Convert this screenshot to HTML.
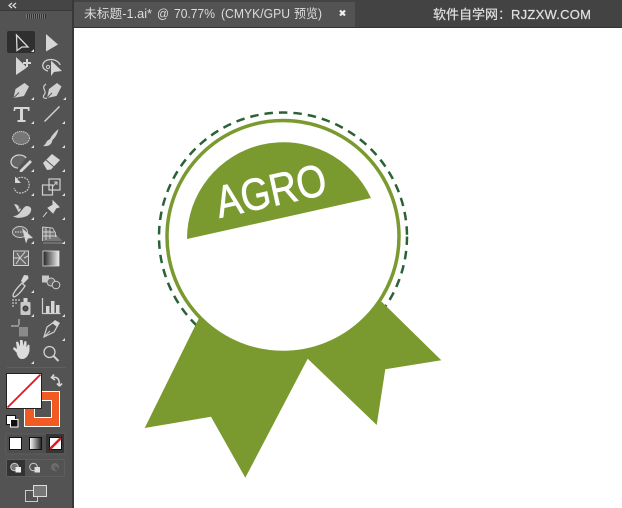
<!DOCTYPE html>
<html><head><meta charset="utf-8"><style>
html,body{margin:0;padding:0;background:#fff;width:622px;height:508px;overflow:hidden}
svg{display:block}
text{font-family:"Liberation Sans","Noto Sans CJK SC",sans-serif}
</style></head><body>
<svg width="622" height="508" viewBox="0 0 622 508" xmlns="http://www.w3.org/2000/svg">
<defs>
<linearGradient id="g1" x1="0" x2="1" y1="0" y2="0"><stop offset="0" stop-color="#fff"/><stop offset="1" stop-color="#222"/></linearGradient>
<linearGradient id="g2" x1="0" x2="1" y1="0" y2="0"><stop offset="0" stop-color="#222"/><stop offset="1" stop-color="#eee"/></linearGradient>
</defs>
<rect width="622" height="508" fill="#fff"/>
<!-- top bar -->
<rect x="74" y="0" width="548" height="28" fill="#434343"/>
<rect x="74" y="2" width="281" height="26" fill="#535353"/>
<rect x="74" y="27" width="548" height="1" fill="#333"/>
<g font-size="12.500" fill="#dcdcdc">
<text x="84" y="18" textLength="68" lengthAdjust="spacingAndGlyphs">未标题-1.ai*</text>
<text x="157" y="18" textLength="12" lengthAdjust="spacingAndGlyphs">@</text>
<text x="174" y="18" textLength="41" lengthAdjust="spacingAndGlyphs">70.77%</text>
<text x="221" y="18" textLength="69" lengthAdjust="spacingAndGlyphs">(CMYK/GPU</text>
<text x="294" y="18" textLength="28" lengthAdjust="spacingAndGlyphs">预览)</text>
</g>
<path d="M340 10.500l5 5M345 10.500l-5 5" stroke="#eee" stroke-width="2.200"/>
<text x="433" y="19" font-size="13" fill="#e2e2e2" stroke="#e2e2e2" stroke-width=".2" textLength="65" lengthAdjust="spacingAndGlyphs">软件自学网</text>
<text x="498" y="19" font-size="13" fill="#e2e2e2">：</text>
<text x="511" y="19" font-size="13" fill="#e2e2e2" stroke="#e2e2e2" stroke-width=".2" textLength="80" lengthAdjust="spacing">RJZXW.COM</text>

<!-- toolbar -->
<rect x="0" y="0" width="73" height="508" fill="#535353"/>
<rect x="0" y="0" width="73" height="10" fill="#454545"/>
<rect x="72" y="0" width="2" height="508" fill="#383838"/>
<rect x="0" y="10" width="73" height="1" fill="#3a3a3a"/>
<path d="M12 3l-3 2.500 3 2.500M16 3l-3 2.500 3 2.500" fill="none" stroke="#ddd" stroke-width="1.200"/>
<rect x="26" y="14" width="20" height="4.500" fill="#2e2e2e"/>
<path d="M26.500 14v4.500M28.500 14v4.500M30.500 14v4.500M32.500 14v4.500M34.500 14v4.500M36.500 14v4.500M38.500 14v4.500M40.500 14v4.500M42.500 14v4.500M44.500 14v4.500" stroke="#777" stroke-width="1"/>

<rect x="7" y="31" width="28" height="22" rx="2" fill="#2f2f2f"/>
<path d="M16.500 35L28 47h-6l-5 3.500z" fill="none" stroke="#d8d8d8" stroke-width="1.300"/>
<path d="M46 34l12 10.500-12 7z" fill="#d6d6d6"/>
<path d="M16 57l11 10.500-11 7.500z" fill="#d6d6d6"/>
<path d="M27 59v8M23 63h8" stroke="#d6d6d6" stroke-width="2"/>
<path d="M48 71c-4-1-6-4-5-7 2-5 10-6 15-2 1 1 2 2 2 3" fill="none" stroke="#d0d0d0" stroke-width="1.300"/>
<path d="M51 60.500l11 10.500-8 1-3 4z" fill="#d6d6d6"/>
<circle cx="48" cy="67" r="1.600" fill="none" stroke="#d0d0d0"/>

<path d="M13.500 98l2-9 9-6 4.500 3.500-5 9.500z" fill="#d0d0d0"/><path d="M14 97.500l5-5" stroke="#535353" stroke-width="1"/>
<path d="M47 98l2-9 8-6 4.500 3.500-5 9.500z" fill="#d0d0d0"/><path d="M47 98l5-5" stroke="#535353"/>
<path d="M46 84c-6 4 2 7-2 11-1.500 2 0 4 3 3" fill="none" stroke="#ccc" stroke-width="1.200"/>

<path d="M14 107h15.500v4h-1.500l-.5-2h-4.500v11h2.500v2h-8v-2h2.500v-11h-4.500l-.5 2h-1.500z" fill="#d6d6d6"/>
<path d="M44.500 121.500l15-15" stroke="#d0d0d0" stroke-width="1.500"/>

<ellipse cx="21" cy="138" rx="8.500" ry="6.500" fill="#777" stroke="#ccc" stroke-width="1" stroke-dasharray="1.500 .7"/>
<path d="M43 146c2-1 3-3 4-5l3-2c2-4 5-7 8.500-10-1 5-3 8-6 11l-1 3c-2 3-5 3.500-8.500 3z" fill="#d0d0d0"/>

<path d="M18 168c-4 0-7-3-7-6 0-4 4-7 8-7 3 0 6 1 7 3" fill="#666" stroke="#d0d0d0" stroke-width="1.300"/>
<path d="M20 170l10-10 2 2-10 10h-2.500z" fill="#d6d6d6"/>
<path d="M43 163l9-9 8 6-9 9.500-4 .5z" fill="#d6d6d6"/><path d="M46 160l8 7" stroke="#535353" stroke-width="1"/>

<path d="M16 179c5-3 12-2 13 4 1 6-3 10-9 10-3 0-5-2-6-5" fill="none" stroke="#c8c8c8" stroke-width="1.200" stroke-dasharray="1.800 1"/>
<path d="M15 176.500v6.500h6z" fill="#d6d6d6"/>
<rect x="42.500" y="185" width="10" height="10" fill="#535353" stroke="#d0d0d0" stroke-width="1.200"/>
<rect x="49" y="179" width="11" height="11" fill="none" stroke="#d0d0d0" stroke-width="1.200"/>
<path d="M52 187l5-5M54 182h3v3" fill="none" stroke="#d0d0d0"/>

<path d="M13 216c3 0 5-1 6-3l-5-9 5 1 2 5 5-4c4 0 6 2 5 5-1 3-3 5-7 6-4 1-8 1.500-11-1z" fill="#d0d0d0"/>
<path d="M17 204c2 1 3 3 2 5M23 208l-5 6" stroke="#535353" fill="none"/>
<path d="M53 201l6 6-3 1-3 5-5-5 5-3zM47 212l-4 5" fill="#d6d6d6" stroke="#d6d6d6"/>

<ellipse cx="20" cy="232" rx="7.500" ry="5.500" fill="#666" stroke="#c8c8c8"/>
<path d="M15 232h8" stroke="#ddd" stroke-dasharray="1.500 1"/>
<path d="M22 228l11 10-5 .5-2 5z" fill="#d6d6d6"/>
<path d="M42.500 227v14h20l-8-8-12-6z" fill="#777"/>
<path d="M42.500 227v14M42.500 227l10 1 3 5v4M46 227v13M50 228v11M43 232l12 0M43 236l14 0" fill="none" stroke="#d0d0d0" stroke-width=".9"/>
<path d="M43 243h20" stroke="#8a8a8a" stroke-width="1"/>

<rect x="13.500" y="251" width="15" height="14.500" fill="#666" stroke="#d0d0d0"/>
<path d="M14 258l6 0 5-6M20 258l6 6M20 258l-4 6M17 253l3 5M24 258l4-2" stroke="#d0d0d0" fill="none"/>
<rect x="43" y="251" width="16" height="15" fill="url(#g2)" stroke="#ddd" stroke-width=".8"/>

<path d="M13 296c0-3 4-8 9-13l3 3c-4 6-8 10-11 11z" fill="none" stroke="#d0d0d0" stroke-width="1.300"/>
<path d="M21 281l3-6 4 .5 .5 3-5 5z" fill="#d6d6d6"/>
<rect x="42" y="275.500" width="7" height="7" fill="#c8c8c8"/>
<circle cx="51" cy="282" r="4" fill="#666" stroke="#d0d0d0"/>
<circle cx="56" cy="285" r="3.800" fill="#535353" stroke="#d0d0d0"/>

<g fill="#9a9a9a"><rect x="12" y="299" width="2" height="2"/><rect x="15" y="299" width="2" height="2"/><rect x="18" y="299" width="2" height="2"/><rect x="12" y="302" width="2" height="2"/><rect x="15" y="302" width="2" height="2"/><rect x="12" y="305" width="2" height="2"/></g>
<rect x="20.500" y="302" width="10" height="13" rx="1" fill="#c8c8c8"/><rect x="23.500" y="298" width="4" height="4" fill="#d6d6d6"/>
<circle cx="25.500" cy="308.500" r="2.500" fill="#535353" stroke="#333"/>
<path d="M42.500 298v15.500h18" fill="none" stroke="#d0d0d0" stroke-width="1.200"/>
<path d="M46 306h3.500v7h-3.500zM51 301h3.500v12h-3.500zM56 305h3.500v8h-3.500z" fill="#d6d6d6"/>

<path d="M11 326h8M19 319v6" stroke="#d0d0d0" stroke-width="1"/>
<path d="M19 327h9v9.500h-9z" fill="#8a8a8a"/>
<path d="M44 337l3-10 7-5 4 3-4 7z" fill="none" stroke="#d0d0d0" stroke-width="1.200"/>
<path d="M52 323l3-3 5 3-3 4z" fill="#d6d6d6"/><path d="M44 337l6-6" stroke="#d0d0d0"/>

<path d="M17 353l-4-4 1-2 3 2-1-7 2-.5 2 5v-6.500h2.500l1 6 1-5 2 .5 0 6 1.500-3 1.500 .5 0 6c-1 4-3 8-7.500 8-3 0-4-2-5.500-6z" fill="#ddd"/>
<circle cx="49.500" cy="352" r="5.500" fill="none" stroke="#d0d0d0" stroke-width="1.300"/>
<path d="M53.500 356l5 5" stroke="#d0d0d0" stroke-width="2"/>
<g fill="#e0e0e0"><path d="M31 52h3v-3z"/><path d="M31 100h3v-3zM63 100h3v-3z"/><path d="M31 124h3v-3zM62 124h3v-3z"/><path d="M31 148h3v-3zM62 148h3v-3z"/><path d="M31 172h3v-3zM62 172h3v-3z"/><path d="M31 196h3v-3zM62 196h3v-3z"/><path d="M31 220h3v-3zM62 220h3v-3z"/><path d="M31 244h3v-3zM62 244h3v-3z"/><path d="M31 293h3v-3z"/><path d="M31 317h3v-3zM62 317h3v-3z"/><path d="M62 341h3v-3z"/><path d="M31 364h3v-3z"/></g>
<rect x="7" y="367" width="59" height="1" fill="#5f5f5f"/>

<!-- fill/stroke -->
<path d="M54 374.500l-2.500 3 3.500 2.500M52 377.500c5-1 8 1 7 8M59.500 386l-2.500-2.500M59.500 386l2.500-2.500" fill="none" stroke="#d6d6d6" stroke-width="1.600"/>
<rect x="24.500" y="391.500" width="35" height="35" fill="#f15a22" stroke="#fff" stroke-width="1"/>
<rect x="34.500" y="400.500" width="17" height="17" fill="#535353" stroke="#fff" stroke-width="1"/>
<rect x="6.500" y="373.500" width="35" height="35" fill="#fff" stroke="#222" stroke-width="1"/>
<path d="M7.500 407.500l33-33" stroke="#e8141e" stroke-width="1.800"/>
<rect x="6.500" y="415.500" width="9" height="9" fill="#fff" stroke="#111"/>
<rect x="10.500" y="419.500" width="7.500" height="7.500" fill="#111" stroke="#fff"/>

<rect x="6" y="434" width="59" height="20" fill="#4e4e4e" stroke="#5e5e5e"/>
<rect x="46" y="434" width="18" height="19" fill="#353535"/>
<rect x="9.500" y="437.500" width="12" height="12" fill="#fff" stroke="#111"/>
<rect x="29.500" y="437.500" width="12" height="12" fill="url(#g1)" stroke="#111"/>
<rect x="49.500" y="437.500" width="12" height="12" fill="#fff" stroke="#111"/>
<path d="M50 449l11-11" stroke="#e8141e" stroke-width="2.500"/>

<rect x="6.500" y="459.500" width="58" height="17" rx="1" fill="none" stroke="#5e5e5e"/>
<rect x="7" y="460" width="18" height="16" fill="#333"/>
<circle cx="14.500" cy="467" r="3.800" fill="#777" stroke="#ccc"/><rect x="15.500" y="467" width="5.500" height="5.500" fill="#eee"/>
<circle cx="33.500" cy="467" r="3.800" fill="#535353" stroke="#ccc"/><rect x="34.500" y="467" width="5.500" height="5.500" fill="#ddd"/>
<circle cx="55" cy="467" r="3.300" fill="#666" stroke="#777"/><rect x="55" y="467" width="3" height="3" fill="#555"/>

<rect x="25.500" y="490.500" width="12" height="11" fill="#535353" stroke="#ccc"/>
<rect x="33.500" y="485.500" width="13" height="11" fill="#777" stroke="#ddd"/>

<!-- badge -->
<circle cx="283" cy="236.500" r="124" fill="none" stroke="#2b6136" stroke-width="2.500" stroke-dasharray="8.500 6"/>
<path d="M199 318L144.700 428L211 416.700L245.300 477.700L307.700 358.700L376.700 425L385.300 369.300L441.300 360.300L381.700 301.700L300 290z" fill="#7a9a2f"/>
<circle cx="283" cy="236.500" r="116" fill="#fff" stroke="#7a9a2f" stroke-width="3.500"/>
<path d="M187 239A96.500 96.500 0 0 1 371 198z" fill="#7a9a2f"/>
<text transform="translate(219.500 218) rotate(-12.500)" font-size="45" fill="#fff" stroke="#fff" stroke-width=".7" textLength="112" lengthAdjust="spacingAndGlyphs">AGRO</text>
</svg>
</body></html>
